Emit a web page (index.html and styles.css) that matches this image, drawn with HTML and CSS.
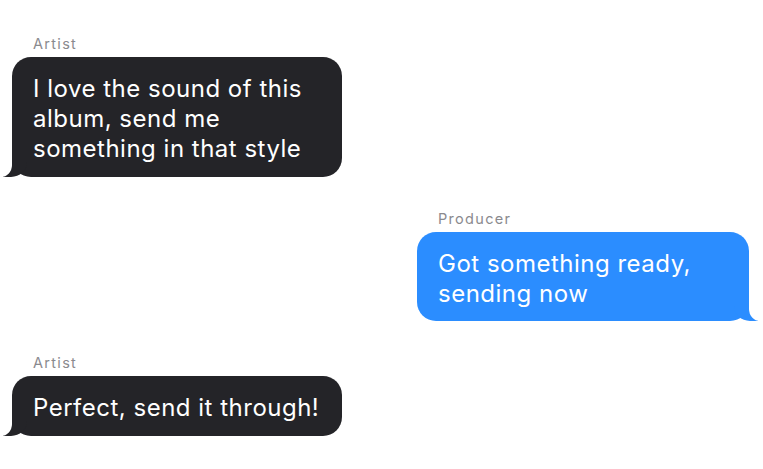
FILE: index.html
```html
<!DOCTYPE html>
<html lang="en">
<head>
<meta charset="utf-8">
<title>Messages</title>
<link rel="stylesheet" href="styles.css">
</head>
<body>
<main class="thread">
  <section class="group group-left">
    <div class="sender">Artist</div>
    <div class="bubble bubble-in">I love the sound of this album, send me something in that style</div>
  </section>
  <section class="group group-right">
    <div class="sender">Producer</div>
    <div class="bubble bubble-out">Got something ready, sending now</div>
  </section>
  <section class="group group-left">
    <div class="sender">Artist</div>
    <div class="bubble bubble-in">Perfect, send it through!</div>
  </section>
</main>
</body>
</html>
```

FILE: styles.css
```css
* { box-sizing: border-box; }
html, body { margin: 0; padding: 0; background: #ffffff; }
body {
  font-family: Inter, "Liberation Sans", sans-serif;
  -webkit-font-smoothing: antialiased;
}
.thread {
  display: flex;
  flex-direction: column;
  gap: 33px;
  padding: 35px 14px 0 12px;
}
.group {
  display: flex;
  flex-direction: column;
  gap: 4px;
}
.group-left { align-items: flex-start; }
.group-right { align-items: flex-end; }
.sender {
  font-size: 14.5px;
  line-height: 18px;
  letter-spacing: 1.3px;
  color: #8a8a8e;
  padding-left: 21px;
  width: 330px;
}
.group-right .sender { width: 332px; }
.bubble {
  position: relative;
  width: 330px;
  padding: 17px 21px 13px;
  border-radius: 19px;
  font-size: 24px;
  line-height: 30px;
  letter-spacing: 0.5px;
  color: #ffffff;
}
.bubble-in { background: #242428; }
.bubble-out { background: #2b8dff; width: 332px; padding-bottom: 12px; }
.bubble::before,
.bubble::after {
  content: "";
  position: absolute;
  bottom: 0;
  height: 22px;
}
.bubble-in::before {
  left: -9px;
  width: 24px;
  background: #242428;
  border-bottom-right-radius: 16px 15px;
}
.bubble-in::after {
  left: -13px;
  width: 13px;
  background: #ffffff;
  border-bottom-right-radius: 11px 12px;
  height: 24px;
}
.bubble-out::before {
  right: -9px;
  width: 24px;
  background: #2b8dff;
  border-bottom-left-radius: 16px 15px;
}
.bubble-out::after {
  right: -13px;
  width: 13px;
  background: #ffffff;
  border-bottom-left-radius: 11px 12px;
  height: 24px;
}
```
